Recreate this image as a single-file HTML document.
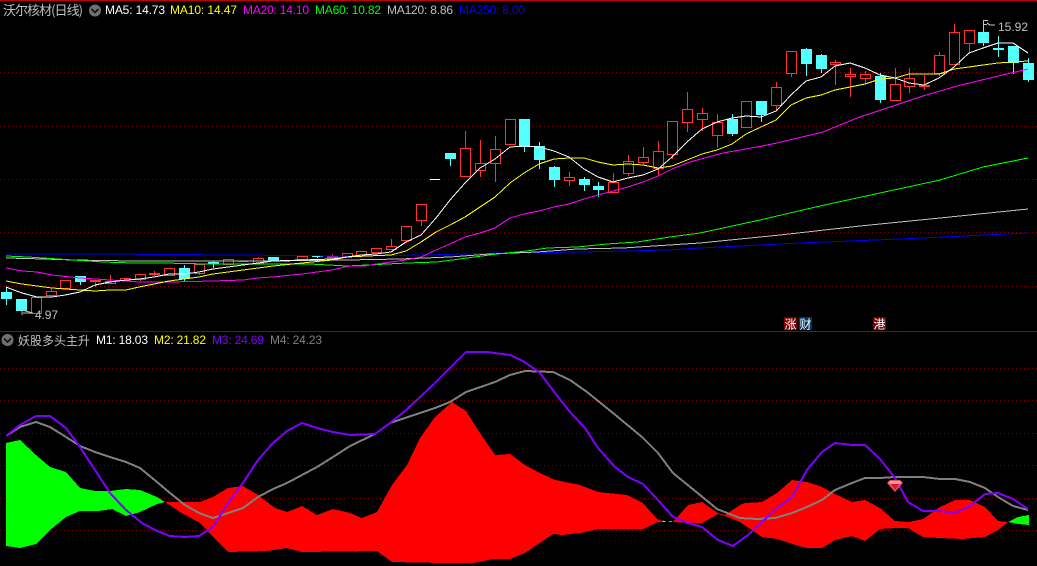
<!DOCTYPE html>
<html>
<head>
<meta charset="utf-8">
<title>沃尔核材</title>
<style>
html,body{margin:0;padding:0;background:#000;width:1037px;height:566px;overflow:hidden}
svg{display:block;position:absolute;left:0;top:0}
text{font-family:"Liberation Sans","WenQuanYi Zen Hei","Noto Sans CJK SC",sans-serif;font-size:12px}
.cjk{font-family:"WenQuanYi Zen Hei","Noto Sans CJK SC",sans-serif}
</style>
</head>
<body>
<svg width="1037" height="566" viewBox="0 0 1037 566" xmlns="http://www.w3.org/2000/svg">
<defs>
<pattern id="dots" x="0" y="0" width="4" height="1" patternUnits="userSpaceOnUse"><rect width="1" height="1" fill="#780000" shape-rendering="crispEdges"/></pattern>
</defs>
<rect width="1037" height="566" fill="#000"/>
<rect width="1037" height="1" fill="#c00000"/>
<rect y="331" width="1037" height="1" fill="#a00000"/>
<g fill="url(#dots)" shape-rendering="crispEdges">
<rect y="72" width="1037" height="1"/>
<rect y="126" width="1037" height="1"/>
<rect y="179" width="1037" height="1"/>
<rect y="232" width="1037" height="1"/>
<rect y="286" width="1037" height="1"/>
<rect y="368" width="1037" height="1"/>
<rect y="400" width="1037" height="1"/>
<rect y="433" width="1037" height="1"/>
<rect y="465" width="1037" height="1"/>
<rect y="498" width="1037" height="1"/>
<rect y="530" width="1037" height="1"/>
</g>

<!-- candles -->
<g shape-rendering="crispEdges">
<path fill="none" stroke="#ff3232" d="M51.5 289V297M95.5 280V287M110.5 275V284M140.5 274V281M154.5 271V276M199.5 264V275M258.5 257V264M332.5 254V259M391.5 239V250M406.5 226V243M421.5 204V226M465.5 131V177M480.5 140V177M495.5 136V182M569.5 172V186M613.5 173V183M628.5 155V176M643.5 147V164M658.5 141V176M672.5 121V159M687.5 92V132M702.5 108V131M717.5 114V148M746.5 101V128M776.5 82V110M791.5 51V77M835.5 60V85M850.5 68V97M865.5 71V83M895.5 68V85M909.5 68V93M924.5 75V90M939.5 52V76M954.5 24V65M969.5 30V52"/>
<path fill="#000" stroke="#ff3232" d="M31.5 297.5h10v16h-10zM46.5 291.5h10v4h-10zM60.5 280.5h10v8h-10zM90.5 280.5h10v1h-10zM105.5 281.5h10v2h-10zM120.5 278.5h10v2h-10zM135.5 274.5h10v5h-10zM149.5 273.5h10v1h-10zM164.5 268.5h10v7h-10zM194.5 264.5h10v9h-10zM223.5 259.5h10v5h-10zM253.5 258.5h10v5h-10zM297.5 256.5h10v3h-10zM327.5 256.5h10v1h-10zM342.5 253.5h10v3h-10zM356.5 251.5h10v4h-10zM371.5 248.5h10v4h-10zM386.5 246.5h10v3h-10zM401.5 226.5h10v14h-10zM416.5 204.5h10v16h-10zM460.5 148.5h10v28h-10zM475.5 163.5h10v7h-10zM490.5 149.5h10v14h-10zM505.5 119.5h10v25h-10zM564.5 177.5h10v3h-10zM608.5 182.5h10v10h-10zM623.5 161.5h10v12h-10zM638.5 157.5h10v5h-10zM653.5 151.5h10v17h-10zM667.5 121.5h10v33h-10zM682.5 109.5h10v13h-10zM697.5 113.5h10v6h-10zM712.5 122.5h10v13h-10zM741.5 101.5h10v26h-10zM771.5 87.5h10v18h-10zM786.5 51.5h10v22h-10zM830.5 62.5h10v2h-10zM845.5 74.5h10v2h-10zM860.5 74.5h10v4h-10zM890.5 84.5h10v16h-10zM904.5 78.5h10v8h-10zM919.5 85.5h10v1h-10zM934.5 55.5h10v18h-10zM949.5 32.5h10v32h-10zM964.5 30.5h10v13h-10z"/>
<path fill="#ff3232" d="M239 261h9v1h-9zM285 261h5v1h-5z"/>
<path fill="none" stroke="#54ffff" d="M6.5 287V305M80.5 276V285M184.5 265V281M213.5 261V268M317.5 255V258M450.5 153V166M524.5 119V152M539.5 142V169M554.5 166V187M584.5 177V191M598.5 182V197M732.5 114V136M761.5 101V122M806.5 48V76M821.5 54V73M880.5 73V103M983.5 21V46M998.5 36V57M1013.5 46V74M1028.5 58V82"/>
<path fill="#54ffff" d="M1 292h11v7h-11zM16 299h11v12h-11zM75 276h11v6h-11zM179 268h11v11h-11zM208 262h11v2h-11zM268 257h11v4h-11zM312 256h11v1h-11zM445 153h11v6h-11zM519 119h11v28h-11zM534 146h11v14h-11zM549 167h11v13h-11zM579 179h11v6h-11zM593 186h11v4h-11zM727 119h11v15h-11zM756 101h11v14h-11zM801 49h11v15h-11zM816 55h11v14h-11zM875 76h11v24h-11zM978 32h11v11h-11zM993 48h11v2h-11zM1008 46h11v17h-11zM1023 63h11v17h-11z"/>
<rect x="430" y="179" width="10" height="1" fill="#fff"/>
</g>

<!-- moving averages -->
<g fill="none" shape-rendering="crispEdges" stroke-width="1">
<polyline stroke="#0000f0" points="6,254 103,254 235,255 347,256 427,255 500,253 583,252 667,250 700,248 800,243 900,239 1028,233"/>
<polyline stroke="#c0c0c0" points="6,258 44,259 73,260 133,261 163,261 267,261 347,260 400,259 450,257 490,254 537,252 577,249 623,248 700,243 780,235 860,226 940,218 1028,209"/>
<polyline stroke="#00ff00" points="6,256 28,257 73,260 103,262 133,263 163,263 207,264 267,264 310,264 347,266 407,263 437,262 467,258 497,254 527,251 547,248 577,247 607,244 637,242 670,237 700,233 760,220 820,206 880,193 940,180 983,167 1028,158"/>
<polyline stroke="#ff00ff" points="6,268 22,271 37,272 52,275 80,278 95,279 110,280 126,281 139,282 169,282 213,281 243,280 258,278 273,277 302,274 332,270 350,266 365,266 376,264 406,260 421,257 436,250 450,244 465,237 480,233 495,228 510,218 524,214 539,211 554,207 569,204 584,199 598,195 613,191 628,187 643,182 658,176 672,169 690,162 723,153 757,147 777,143 823,132 857,118 890,107 923,96 957,86 990,78 1028,69"/>
<polyline stroke="#ffff00" points="6,281 22,284 37,286 52,288 65,289 80,290 95,291 110,290 126,290 139,287 154,284 169,281 184,279 199,277 213,274 228,272 243,270 258,268 273,266 302,263 332,260 347,257 367,256 391,255 406,251 421,242 436,232 450,225 465,217 480,207 495,197 510,183 524,173 539,164 554,159 569,158 584,158 598,162 613,165 628,164 643,165 658,168 672,166 687,160 702,154 717,150 732,144 746,134 761,127 776,120 791,105 806,98 821,95 835,90 850,87 865,84 880,79 895,78 909,74 939,74 954,69 969,67 983,65 998,63 1013,62 1028,61"/>
<polyline stroke="#ffffff" points="6,287 22,293 37,297 52,297 65,295 80,292 95,285 110,282 126,280 139,279 154,277 169,274 184,274 199,272 213,269 228,267 243,265 258,263 273,261 302,260 332,259 347,257 361,255 376,254 391,252 406,242 421,235 436,218 450,200 465,183 480,168 495,159 510,147 524,146 539,147 554,151 569,157 584,169 598,177 613,182 628,178 643,175 658,169 672,157 687,142 702,129 717,122 732,118 746,116 761,117 776,111 791,95 806,81 821,77 835,66 850,63 865,68 880,75 895,78 909,83 924,85 939,78 954,67 969,53 983,48 998,43 1013,43 1028,53"/>
</g>

<!-- min / max labels -->
<g fill="none" stroke="#c0c0c0" shape-rendering="crispEdges">
<path d="M22 310L33 313H23M22 310V315M22 310H26"/>
<path d="M983.5 20V30M983.5 20.5H988M983.5 24.5H987M987 23L990 25L995 25"/>
</g>
<text x="35" y="319" fill="#c0c0c0" textLength="23">4.97</text>
<text x="998" y="31" fill="#c0c0c0" textLength="30">15.92</text>

<!-- header -->
<text x="3" y="15" class="cjk" style="font-size:13px" fill="#c0c0c0" textLength="80">沃尔核材(日线)</text>
<circle cx="95" cy="10.5" r="6" fill="#707070"/>
<path d="M91.5 9L95 12.5L98.5 9" fill="none" stroke="#111" stroke-width="1.6"/>
<text x="105" y="14" fill="#ffffff" textLength="60">MA5: 14.73</text>
<text x="170" y="14" fill="#ffff00" textLength="67">MA10: 14.47</text>
<text x="243" y="14" fill="#ff00ff" textLength="66">MA20: 14.10</text>
<text x="315" y="14" fill="#00ff00" textLength="66">MA60: 10.82</text>
<text x="387" y="14" fill="#c0c0c0" textLength="66">MA120: 8.86</text>
<text x="459" y="14" fill="#0000ff" textLength="66">MA250: 8.00</text>

<!-- tags -->
<rect x="784" y="317" width="13" height="13" fill="#7a0000"/>
<rect x="799" y="317" width="13" height="13" fill="#003462"/>
<rect x="873" y="317" width="13" height="13" fill="#800000"/>
<text x="784.5" y="328.5" class="cjk" fill="#fff">涨</text>
<text x="799.5" y="328.5" class="cjk" fill="#fff">财</text>
<text x="873.5" y="328.5" class="cjk" fill="#fff">港</text>

<!-- indicator header -->
<circle cx="7.5" cy="340" r="6" fill="#707070"/>
<path d="M4 338.5L7.5 342L11 338.5" fill="none" stroke="#111" stroke-width="1.6"/>
<text x="18" y="345" class="cjk" fill="#c0c0c0" textLength="72">妖股多头主升</text>
<text x="96" y="344" fill="#ffffff" textLength="52">M1: 18.03</text>
<text x="154" y="344" fill="#ffff00" textLength="52">M2: 21.82</text>
<text x="212" y="344" fill="#8000ff" textLength="52">M3: 24.69</text>
<text x="270" y="344" fill="#808080" textLength="52">M4: 24.23</text>

<!-- indicator fills -->
<g shape-rendering="crispEdges">
<polygon fill="#00ff00" points="6,443 20,440 36,455 50,467 66,472 80,488 95,491 110,491 126,489 140,490 157,497 165,502 157,504 140,512 126,516 112,509 99,511 80,511 66,517 50,530 36,544 20,548 6,546"/>
<polygon fill="#ff0000" points="165,502 185,502 200,502 213,497 228,488 243,486 258,495 275,508 287,512 302,506 317,515 333,509 350,513 362,518 377,512 392,485 407,465 420,438 435,417 452,402 466,411 480,433 495,455 510,454 525,465 540,473 555,480 580,485 598,492 627,495 643,503 658,520 666,521 666,522 658,522 643,529 598,529 580,533 563,535 553,534 525,553 510,559 493,559 473,563 443,563 392,562 377,551 302,552 287,548 267,551 228,552 213,537 200,523 180,512"/>
<polygon fill="#ff0000" points="673,522 688,505 702,502 718,513 725,515 740,505 745,503 762,502 777,493 792,480 807,482 822,487 835,494 852,502 865,500 880,508 895,521 908,522 923,519 940,507 955,500 970,500 985,507 998,521 1008,522 998,530 985,537 962,539 940,538 923,537 908,528 895,528 880,529 865,541 852,536 835,540 822,548 807,548 792,544 777,539 762,537 740,522 725,516 718,514 702,523 688,523"/>
<polygon fill="#00ff00" points="1008,522 1018,517 1029,515 1029,525 1018,524"/>
<rect x="663" y="521" width="2" height="1" fill="#ffff00"/>
<rect x="669" y="521" width="3" height="1" fill="#00ff00"/>
</g>

<!-- indicator lines -->
<g fill="none" stroke-width="2" shape-rendering="crispEdges">
<polyline stroke="#808080" points="6,436 20,427 36,422 50,427 66,437 80,446 95,452 110,457 126,462 140,468 157,482 170,493 185,505 199,513 213,518 228,513 243,508 258,497 273,489 287,483 302,475 317,467 333,457 350,446 375,434 390,423 405,418 435,408 450,402 466,392 495,382 510,375 525,371 553,372 570,380 587,392 613,413 642,437 658,453 673,473 700,495 717,509 740,518 757,519 775,518 792,513 807,507 822,500 835,490 852,483 865,478 880,478 895,477 923,477 940,479 955,479 970,482 985,488 998,497 1013,506 1028,510"/>
<polyline stroke="#8000ff" points="6,436 20,425 36,416 50,416 66,428 80,447 95,470 110,493 126,510 142,523 157,531 170,536 185,537 199,536 213,527 228,503 243,483 258,460 273,443 287,431 302,423 317,428 333,432 350,435 375,434 390,423 405,411 418,399 435,383 450,368 466,352 487,352 510,355 523,361 540,373 555,393 570,412 585,428 598,448 615,467 628,477 643,484 658,500 673,517 688,523 702,527 718,540 733,546 748,535 762,522 777,508 792,497 807,470 822,452 835,443 852,445 865,445 880,459 895,478 908,502 923,511 940,511 955,513 970,506 985,494 998,493 1013,499 1028,509"/>
</g>

<!-- gem -->
<polygon points="887,483 890,480 900,480 903,483 895,492" fill="#f04a58"/>
<polygon points="888,483 890,481 900,481 902,483 895,485" fill="#ff9aa0"/>
<polygon points="891,484 899,484 895,490" fill="#d81830"/>
</svg>
</body>
</html>
